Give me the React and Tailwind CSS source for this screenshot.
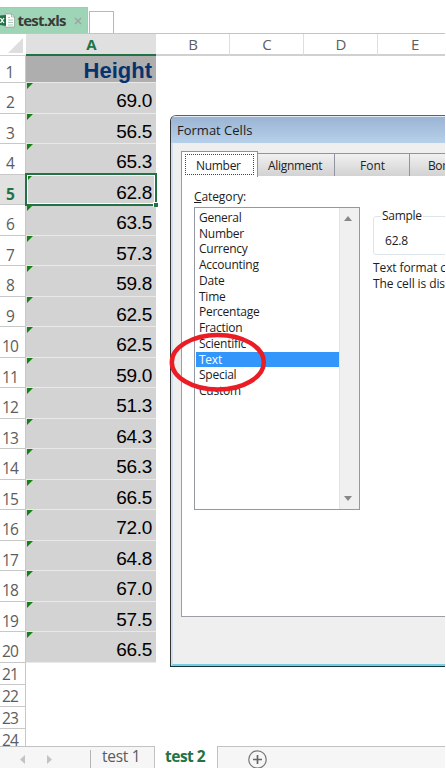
import React from "react";

const heights = ["69.0", "56.5", "65.3", "62.8", "63.5", "57.3", "59.8", "62.5", "62.5", "59.0", "51.3", "64.3", "56.3", "66.5", "72.0", "64.8", "67.0", "57.5", "66.5"];
const categories = ["General", "Number", "Currency", "Accounting", "Date", "Time", "Percentage", "Fraction", "Scientific", "Text", "Special", "Custom"];

function WorkbookTabs() {
  return (
    <div className="flex h-[33px] items-end">
      <div className="flex h-[26px] w-[88px] shrink-0 items-center border-t border-r border-[#b9bdbb] bg-[#9fd5b7]">
        <svg className="h-[17px] w-[16px] shrink-0" viewBox="0 0 16 17">
          <path d="M5 2h6.500l3 3v10H5z" fill="#fff" stroke="#7c9588" strokeWidth=".6" />
          <path d="M11.500 2v3h3" fill="none" stroke="#7c9588" strokeWidth=".6" />
          <path d="M8 5.500h2M8 8h5M8 10.500h5M8 13h5" stroke="#a5cdb8" strokeWidth="1" />
          <path d="M0 3.500 6 3v11l-6-1z" fill="#217346" />
          <path d="m.5 6 3.500 5M4 6 .5 11" stroke="#fff" strokeWidth="1.300" />
        </svg>
        <span className="-mt-px ml-[1.500px] w-[49.500px] text-[15px] font-bold tracking-[-0.75px] text-[#3b3b3b]">test.xls</span>
        <svg className="ml-[7px] h-[8px] w-[8px]" viewBox="0 0 8 8">
          <path d="m1 1 6 6m0-6L1 7" stroke="#9aa69f" strokeWidth="1.600" />
        </svg>
      </div>
      <div className="ml-[1px] h-[22px] w-[25px] border border-b-0 border-[#b8b8b8] bg-white" />
    </div>
  );
}

function ColumnHeaders() {
  return (
    <div className="flex h-[23px] border-t border-[#c4c4c4] text-[15px] leading-[21px] text-[#5c6066]">
      <div className="flex w-[26px] items-end justify-end border-b border-[#d0d0d0] pr-[3px] pb-[2px]">
        <svg className="h-[15px] w-[15px]" viewBox="0 0 15 15"><path d="M15 0v15H0z" fill="#dedede" /></svg>
      </div>
      <div className="w-[130px] border-b-2 border-[#217346] bg-[#e0e0e0] pl-[1px] text-center font-bold text-[#217346]">A</div>
      {["B", "C", "D"].map((c) => (
        <div key={c} className="w-[74px] border-r border-b-2 border-r-[#dedede] border-b-[#d0d0d0] pl-[1px] text-center">{c}</div>
      ))}
      <div className="w-[67px] border-b-2 border-[#d0d0d0] pl-[33px]">E</div>
    </div>
  );
}

function Row({ n, value }) {
  const active = n === 5;
  return (
    <div className="flex h-[30.5px]">
      <div className={"w-[26px] border-r border-b border-[#c8c8c8] pt-[5px] pr-[5px] text-center text-[15.500px] leading-[29px] tracking-[-0.9px] " + (active ? "bg-[#e1e1e1] font-bold text-[#217346]" : "text-[#5c5c5c]")}>{n}</div>
      <div className="relative w-[130px] border-b border-[#e9e9e9] bg-[#d3d3d3] pt-[3px] pr-[4px] text-right font-['Liberation_Sans',sans-serif] text-[19px] leading-[29.500px] tracking-[-0.3px] text-black">
        <svg className="absolute top-0 left-[1px] h-[6px] w-[6px]" viewBox="0 0 6 6"><path d="M0 0h6L0 6z" fill="#128212" /></svg>
        {value}
        {active && (
          <div className="absolute -top-[1.500px] -right-[1px] -bottom-[1.500px] -left-[1px] z-10 border-2 border-[#217346] shadow-[inset_0_0_0_1px_#fff]">
            <div className="absolute -right-[3px] -bottom-[3px] h-[5px] w-[5px] border-t border-l border-white bg-[#217346]" />
          </div>
        )}
      </div>
    </div>
  );
}

function SheetTabs() {
  return (
    <div className="flex h-[22px] bg-[#f6f6f6] text-[15.500px] text-[#5b5b5b]">
      <div className="flex w-[90px] items-center gap-[22px] border-t border-[#c2c2c2] pt-[4px] pl-[20px]">
        <svg className="h-[9px] w-[5px]" viewBox="0 0 5 9"><path d="M5 0v9L0 4.500z" fill="#c3c3c3" /></svg>
        <svg className="h-[9px] w-[5px]" viewBox="0 0 5 9"><path d="M0 0v9l5-4.500z" fill="#c3c3c3" /></svg>
      </div>
      <div className="flex w-[65px] border-t border-r border-[#c2c2c2] pt-[3px]">
        <div className="h-[18px] w-full border-l border-[#b5b5b5] pl-[11px] leading-[12px] tracking-[-0.300px] whitespace-nowrap">test 1</div>
      </div>
      <div className="w-[62px] bg-white pl-[10px] leading-[20px] font-bold tracking-[-0.5px] whitespace-nowrap text-[#217346]">test 2</div>
      <div className="w-[228px] border-t border-l border-[#c2c2c2] pt-[3px] pl-[30px]">
        <svg className="h-[19px] w-[19px]" viewBox="0 0 19 19">
          <circle cx="9.500" cy="9.500" r="8.700" fill="none" stroke="#777" strokeWidth="1.200" />
          <path d="M9.500 5v9M5 9.500h9" stroke="#666" strokeWidth="1.700" />
        </svg>
      </div>
    </div>
  );
}

function DialogTab({ children, className }) {
  return (
    <div className={"h-[24px] shrink-0 border border-l-0 border-[#9194a0] bg-gradient-to-b from-[#f1f1f1] to-[#d2d2d2] text-[12px] leading-[24px] text-[#222] " + className}>{children}</div>
  );
}

function FormatDialog() {
  return (
    <div className="absolute top-[115px] left-[170px] z-20 flex h-[552px] w-[275px] flex-col overflow-hidden rounded-tl-[6px] border-t border-b border-l border-t-[#5e6268] border-b-[#12343c] border-l-[#333] bg-[#efefef] text-[12px] text-[#1c1c1c]">
      <div className="h-[27px] shrink-0 border-t border-[#e2ebf5] bg-gradient-to-b from-[#9ab4d3] to-[#b7d0ea] pl-[6px] text-[13px] leading-[27px]">Format Cells</div>
      <div className="flex flex-1 flex-col border-b-2 border-l-2 border-b-[#74cfe2] border-l-[#d3dfef] pt-[8px] pl-[8px]">
        <div className="flex items-end">
          <div className="z-10 h-[26px] w-[77px] shrink-0 border border-b-0 border-[#9194a0] bg-white p-[3px] pt-[2px]">
            <div className="h-[21px] border border-dotted border-[#444] pl-[10px] leading-[21px] tracking-[-0.3px]">Number</div>
          </div>
          <DialogTab className="w-[77px] pl-[10px] tracking-[-0.3px]">Alignment</DialogTab>
          <DialogTab className="w-[75px] pl-[1px] text-center">Font</DialogTab>
          <DialogTab className="w-[36px] border-r-0 pl-[18px] tracking-[-0.4px]">Bor</DialogTab>
        </div>
        <div className="-mt-px flex h-[441px] items-start border-b border-l border-[#9b9ea8] bg-white pl-[12px]">
          <div className="w-[166px] shrink-0 pt-[11px]">
            <div className="h-[20px] leading-[20px] tracking-[-0.1px]"><span className="underline">C</span>ategory:</div>
            <div className="flex h-[303px] border border-[#9498a2] bg-white">
              <div className="w-[144px] pt-[1.750px] pl-[1px]">
                {categories.map((name) => (
                  <div key={name} className={"h-[15.750px] pl-[3px] text-[12px] leading-[16.500px] tracking-[-0.250px] " + (name === "Text" ? "bg-[#3296fb] text-white" : "")}>{name}</div>
                ))}
              </div>
              <div className="flex w-[20px] flex-col items-center justify-between border-l border-[#e3e3e3] bg-[#f0f0f0] py-[8px] pr-[3px]">
                <svg className="h-[5px] w-[8px]" viewBox="0 0 8 5"><path d="M0 5h8L4 0z" fill="#878787" /></svg>
                <svg className="h-[5px] w-[8px]" viewBox="0 0 8 5"><path d="M0 0h8L4 5z" fill="#878787" /></svg>
              </div>
            </div>
          </div>
          <div className="ml-[13px] w-[90px] pt-[31px] whitespace-nowrap">
            <fieldset className="h-[48px] w-[100px] rounded-[3px] border border-[#dce4ec] pl-[7px]">
              <legend className="px-[1px] leading-[18px] tracking-[-0.3px]">Sample</legend>
              <div className="pt-[7px] pl-[4px] leading-[18px] tracking-[-0.2px]">62.8</div>
            </fieldset>
            <div className="pt-[5px] leading-[16px] tracking-[-0.1px]">Text format c<br />The cell is dis</div>
          </div>
        </div>
      </div>
    </div>
  );
}

export default function App() {
  return (
    <div className="relative h-[768px] w-[446px] overflow-hidden bg-white font-['Open_Sans','Noto_Sans',sans-serif]">
      <div className="flex h-[768px] w-[445px] flex-col">
        <WorkbookTabs />
        <ColumnHeaders />
        <div className="flex h-[690px] flex-col overflow-hidden">
          <div className="flex h-[27px] shrink-0">
            <div className="w-[26px] border-r border-b border-[#c8c8c8] pr-[5px] text-center text-[15.500px] leading-[33px] text-[#5c5c5c]">1</div>
            <div className="w-[130px] border-b border-[#e9e9e9] bg-[#aeaeae] pr-[4px] text-right font-['Liberation_Sans',sans-serif] text-[22px] leading-[29px] font-bold text-[#06336e]">Height</div>
          </div>
          {heights.map((v, i) => <Row key={i} n={i + 2} value={v} />)}
          {[21, 22, 23, 24].map((n) => (
            <div key={n} className="h-[22px] w-[26px] shrink-0 border-r border-b border-[#c8c8c8] pr-[5px] text-center text-[15.500px] leading-[23px] tracking-[-0.9px] text-[#5c5c5c]">{n}</div>
          ))}
        </div>
        <SheetTabs />
      </div>
      <FormatDialog />
      <svg className="absolute top-[331px] left-[168px] z-30 h-[63px] w-[100px]" viewBox="0 0 100 63">
        <ellipse cx="49.800" cy="31.200" rx="46" ry="27.300" fill="none" stroke="#ea1c24" strokeWidth="4.500" />
      </svg>
    </div>
  );
}
